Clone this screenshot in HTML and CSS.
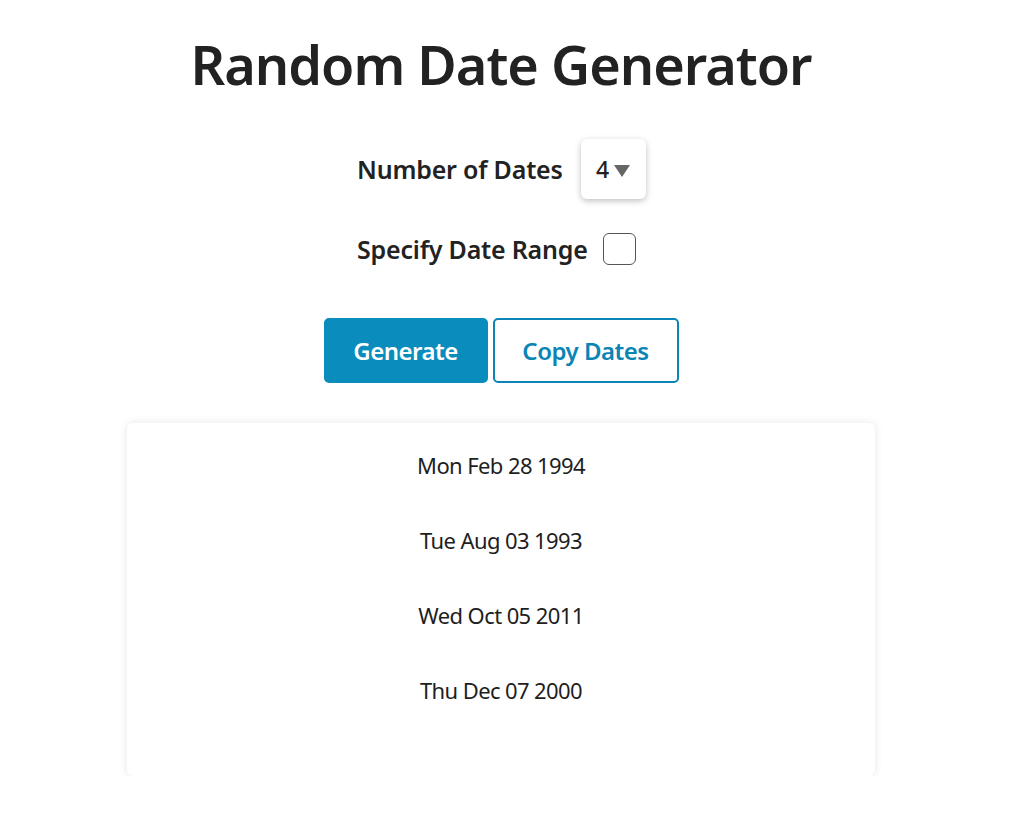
FILE: index.html
```html
<!DOCTYPE html>
<html lang="en">
<head>
<meta charset="utf-8">
<title>Random Date Generator</title>
<link rel="stylesheet" href="styles.css">
</head>
<body>
<main class="page">
  <h1 class="title">Random Date Generator</h1>
  <div class="options">
    <div class="row row-count">
      <span class="label">Number of Dates</span>
      <div class="select"><span class="select-value">4</span><span class="caret"></span></div>
    </div>
    <div class="row row-range">
      <span class="label">Specify Date Range</span>
      <span class="checkbox"></span>
    </div>
  </div>
  <div class="actions">
    <button class="btn btn-primary">Generate</button>
    <button class="btn btn-outline">Copy Dates</button>
  </div>
  <section class="card">
    <p class="date">Mon Feb 28 1994</p>
    <p class="date">Tue Aug 03 1993</p>
    <p class="date">Wed Oct 05 2011</p>
    <p class="date">Thu Dec 07 2000</p>
  </section>
</main>
</body>
</html>
```
FILE: styles.css
```css
html, body {
  margin: 0;
  padding: 0;
  background: #ffffff;
}
body {
  font-family: "Noto Sans", "Open Sans", sans-serif;
  color: #222222;
}
.page {
  width: 1002px;
  display: flex;
  flex-direction: column;
  align-items: center;
  padding-top: 26px;
}
.title {
  margin: 0;
  font-size: 54px;
  line-height: 76px;
  font-weight: 600;
  letter-spacing: -1px;
  color: #222222;
}
.options {
  margin-top: 37px;
  display: flex;
  flex-direction: column;
  align-items: flex-start;
  gap: 33px;
  width: 288px;
}
.row {
  display: flex;
  align-items: center;
  white-space: nowrap;
}
.label {
  flex-shrink: 0;
  white-space: nowrap;
  font-size: 25px;
  font-weight: 600;
  letter-spacing: -0.2px;
  color: #222222;
}
.row-count .label { margin-right: 18px; }
.row-range .label { margin-right: 15px; }
.select {
  flex-shrink: 0;
  width: 65px;
  height: 60px;
  box-sizing: border-box;
  border-radius: 6px;
  background: #fff;
  box-shadow: 0 2px 6px rgba(0,0,0,0.25);
  display: flex;
  align-items: center;
  justify-content: center;
  gap: 5px;
}
.select-value {
  font-size: 23px;
  font-weight: 500;
  color: #222;
}
.caret {
  width: 0;
  height: 0;
  border-left: 8px solid transparent;
  border-right: 8px solid transparent;
  border-top: 12px solid #666;
  margin-top: 3px;
}
.checkbox {
  flex-shrink: 0;
  width: 33px;
  height: 32px;
  box-sizing: border-box;
  border: 1.5px solid #555;
  border-radius: 6px;
  background: #fff;
}
.actions {
  margin-top: 52px;
  display: flex;
  gap: 5px;
}
.btn {
  height: 65px;
  box-sizing: border-box;
  border-radius: 5px;
  font-family: "Noto Sans", "Open Sans", sans-serif;
  font-size: 24px;
  font-weight: 600;
  letter-spacing: -0.5px;
  cursor: pointer;
}
.btn-primary {
  width: 164px;
  background: #0a8dbd;
  color: #ffffff;
  border: 2px solid #0a8dbd;
}
.btn-outline {
  width: 186px;
  background: #ffffff;
  color: #0a85b5;
  border: 2px solid #0a85b5;
}
.card {
  margin-top: 40px;
  width: 748px;
  height: 353px;
  box-sizing: border-box;
  border-radius: 6px;
  background: #fff;
  box-shadow: 0 0 8px rgba(0,0,0,0.10);
  padding-top: 27px;
  display: flex;
  flex-direction: column;
  align-items: center;
  gap: 44px;
}
.date {
  margin: 0;
  font-size: 22px;
  line-height: 31px;
  letter-spacing: -0.6px;
  color: #1e1e1e;
}
```
